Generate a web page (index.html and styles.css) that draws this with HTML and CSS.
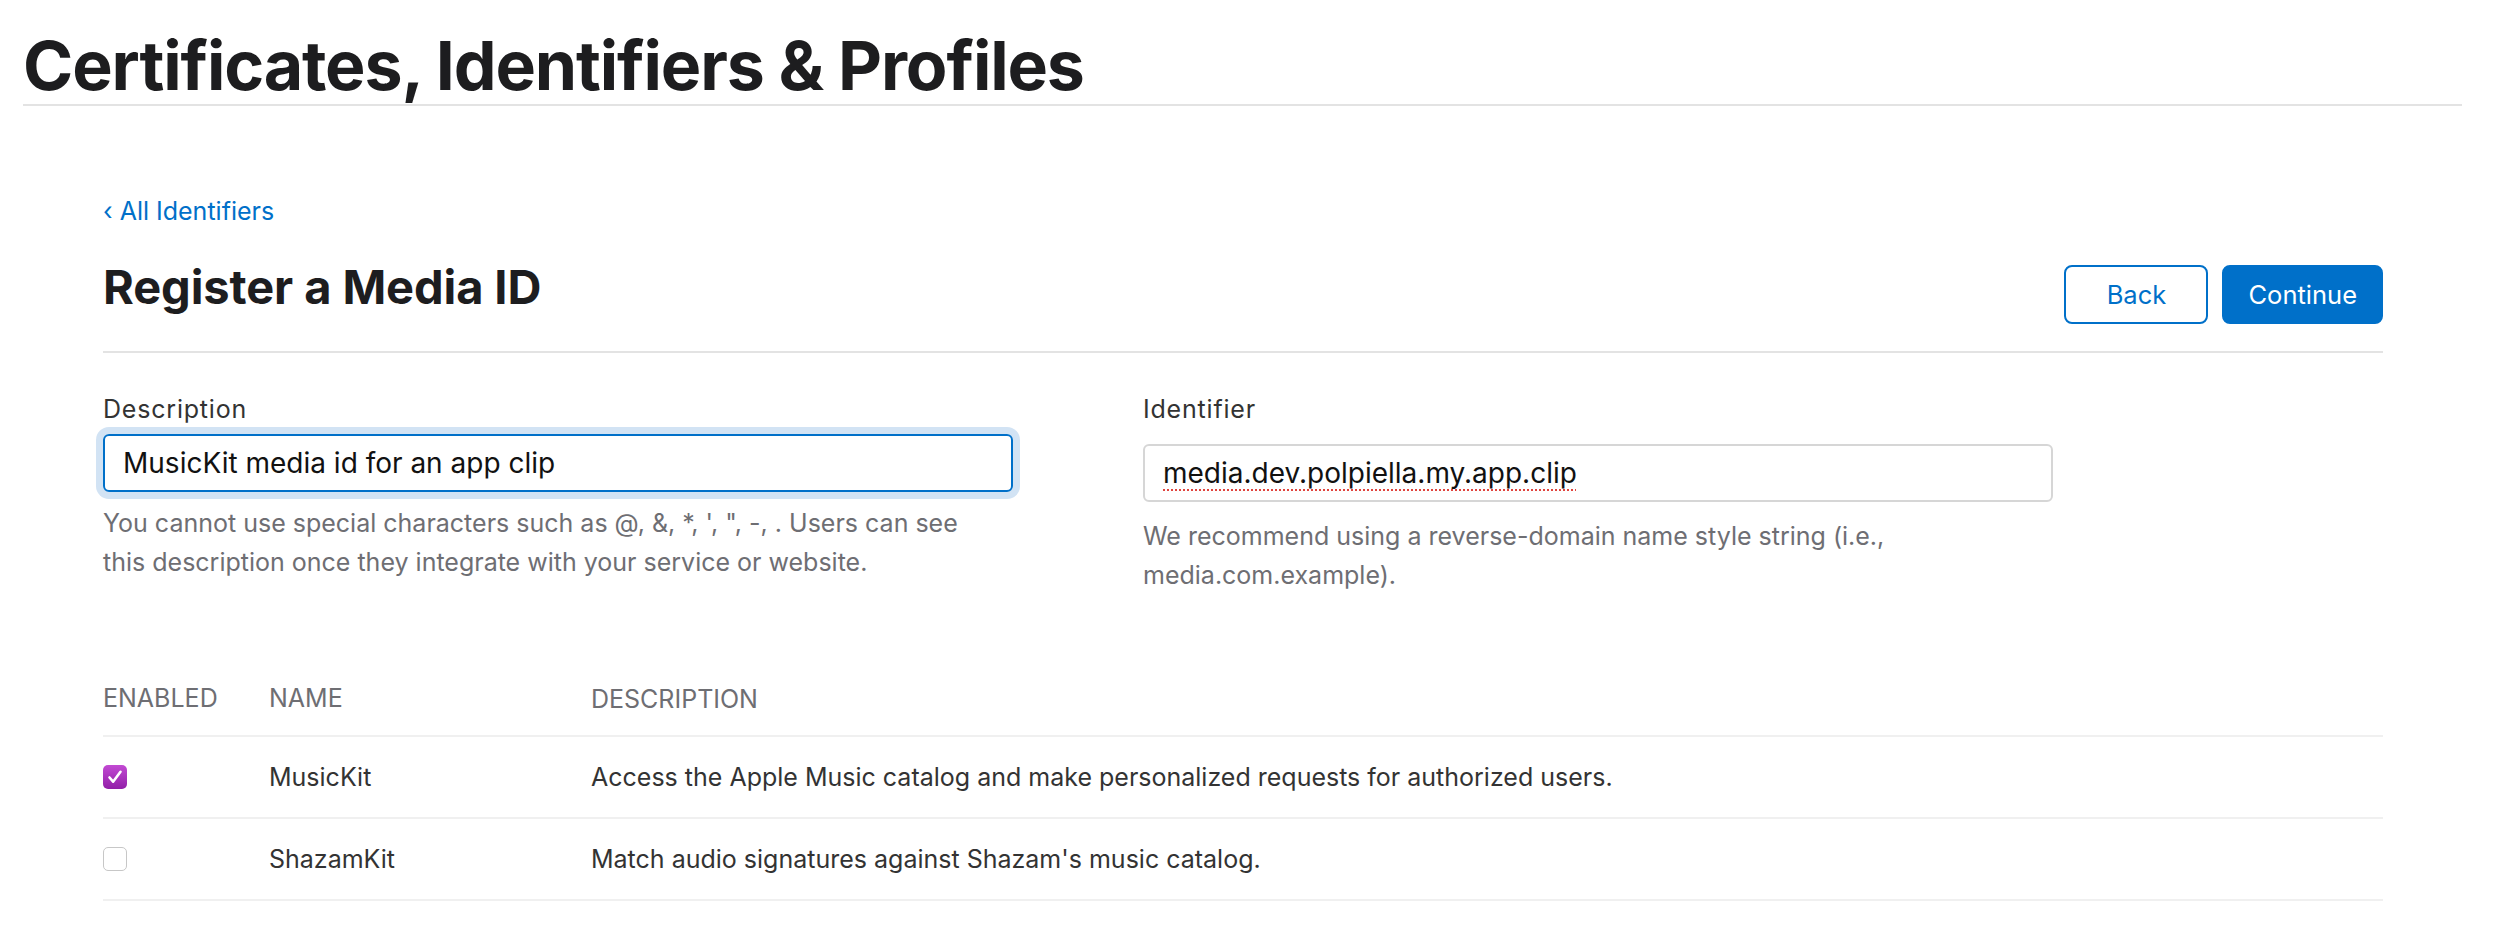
FILE: index.html
```html
<!DOCTYPE html>
<html lang="en">
  <head>
    <meta charset="UTF-8" />
    <meta name="viewport" content="width=device-width, initial-scale=1.0" />
    <title>Register a Media ID</title>
    <link rel="stylesheet" href="styles.css">
  </head>
  <body>
    <header class="page-header">
      <h1 class="page-title">Certificates, Identifiers &amp; Profiles</h1>
    </header>
    <main class="content">
      <a class="back-link" href="#">&lsaquo; All Identifiers</a>
      <div class="heading-row">
        <h2 class="heading">Register a Media ID</h2>
        <div class="actions">
          <button class="btn btn_secondary" type="button">Back</button>
          <button class="btn btn_primary" type="button">Continue</button>
        </div>
      </div>
      <div class="form">
        <div class="field">
          <label class="field__label">Description</label>
          <div class="field__input field__input_focused">MusicKit media id for an app clip</div>
          <p class="field__help">You cannot use special characters such as @, &amp;, *, ', ", -, . Users can see this description once they integrate with your service or website.</p>
        </div>
        <div class="field">
          <label class="field__label">Identifier</label>
          <div class="field__input field__input_idle"><span class="misspelled">media.dev.polpiella.my.app.clip</span></div>
          <p class="field__help field__help_idle">We recommend using a reverse-domain name style string (i.e., media.com.example).</p>
        </div>
      </div>
      <table class="services">
        <thead>
          <tr>
            <th class="services__enabled">Enabled</th>
            <th class="services__name">Name</th>
            <th class="services__description">Description</th>
          </tr>
        </thead>
        <tbody>
          <tr>
            <td><span class="checkbox checkbox_checked"><svg viewBox="0 0 24 24" width="24" height="24"><path d="M6.5 12.5l3.6 4.2L17.5 6.8" fill="none" stroke="#fff" stroke-width="2.6" stroke-linecap="round" stroke-linejoin="round"/></svg></span></td>
            <td>MusicKit</td>
            <td>Access the Apple Music catalog and make personalized requests for authorized users.</td>
          </tr>
          <tr>
            <td><span class="checkbox"></span></td>
            <td>ShazamKit</td>
            <td>Match audio signatures against Shazam's music catalog.</td>
          </tr>
        </tbody>
      </table>
    </main>
  </body>
</html>
```

FILE: styles.css
```css
:root {
  --text-color: #1d1d1f;
  --label-color: #333333;
  --muted-color: #6e6e73;
  --link-color: #0070c9;
  --line-color: #e3e3e3;
  --row-line-color: #f0f0f0;
  --white-color: #fff;
}

* {
  box-sizing: border-box;
  margin: 0;
  padding: 0;
}
body {
  font-family: Inter, "Liberation Sans", Arial, sans-serif;
  color: var(--text-color);
  background-color: var(--white-color);
}

.page-header {
  margin: 0 58px 0 23px;
  padding: 30px 0 4px;
  border-bottom: 2px solid var(--line-color);
}
.page-title {
  font-size: 68px;
  line-height: 70px;
  font-weight: 700;
  letter-spacing: -1.15px;
}

.content {
  margin: 0 137px 0 103px;
}

.back-link {
  display: inline-block;
  margin-top: 91px;
  font-size: 25px;
  line-height: 28px;
  color: var(--link-color);
  text-decoration: none;
}

.heading-row {
  display: flex;
  justify-content: space-between;
  align-items: flex-start;
  margin-top: 33px;
  padding-bottom: 27px;
  border-bottom: 2px solid var(--line-color);
}
.heading {
  font-size: 47px;
  line-height: 58px;
  font-weight: 700;
  letter-spacing: -0.1px;
}
.actions {
  display: flex;
  gap: 14px;
  margin-top: 7px;
}
.btn {
  min-width: 144px;
  height: 59px;
  padding: 0 24px;
  border: solid 2px var(--link-color);
  border-radius: 8px;
  font-family: inherit;
  font-size: 25.5px;
}
.btn_secondary {
  background-color: var(--white-color);
  color: var(--link-color);
}
.btn_primary {
  background-color: var(--link-color);
  color: var(--white-color);
}

.form {
  display: grid;
  grid-template-columns: 910px 910px;
  column-gap: 130px;
  margin-top: 42px;
}
.field__label {
  display: block;
  font-size: 25px;
  line-height: 28px;
  letter-spacing: 0.8px;
  color: var(--label-color);
}
.field__input {
  height: 58px;
  margin-top: 11px;
  padding: 0 18px;
  border: solid 2px #d6d6d6;
  border-radius: 6px;
  font-size: 28px;
  line-height: 54px;
  color: #111;
}
.field__input_focused {
  border-color: var(--link-color);
  box-shadow: 0 0 0 7px #d2e3f4;
}
.field__input_idle {
  margin-top: 21px;
}
.misspelled {
  text-decoration: underline dotted #e0443e;
  text-decoration-thickness: 2px;
  text-underline-offset: 6px;
}
.field__help {
  margin-top: 12px;
  padding-right: 20px;
  font-size: 25px;
  line-height: 38.5px;
  color: var(--muted-color);
}
.field__help_idle {
  margin-top: 15px;
}

.services {
  width: 100%;
  margin-top: 88px;
  border-collapse: collapse;
}
.services th {
  padding: 0 0 22px;
  font-size: 25px;
  line-height: 28px;
  font-weight: 400;
  text-align: left;
  text-transform: uppercase;
  color: var(--muted-color);
  border-bottom: 2px solid var(--row-line-color);
}
.services__enabled {
  width: 166px;
}
.services__name {
  width: 322px;
}
.services th.services__description {
  padding-top: 3px;
}
.services td {
  height: 82px;
  font-size: 25px;
  color: var(--label-color);
  vertical-align: middle;
  border-bottom: 2px solid var(--row-line-color);
}

.checkbox {
  display: block;
  width: 24px;
  height: 24px;
  border: solid 1.5px #c7c7c7;
  border-radius: 5px;
  background-color: var(--white-color);
}
.checkbox_checked {
  border: none;
  background: linear-gradient(#c24ad3, #921fa8);
}
.checkbox svg {
  display: block;
}
```
